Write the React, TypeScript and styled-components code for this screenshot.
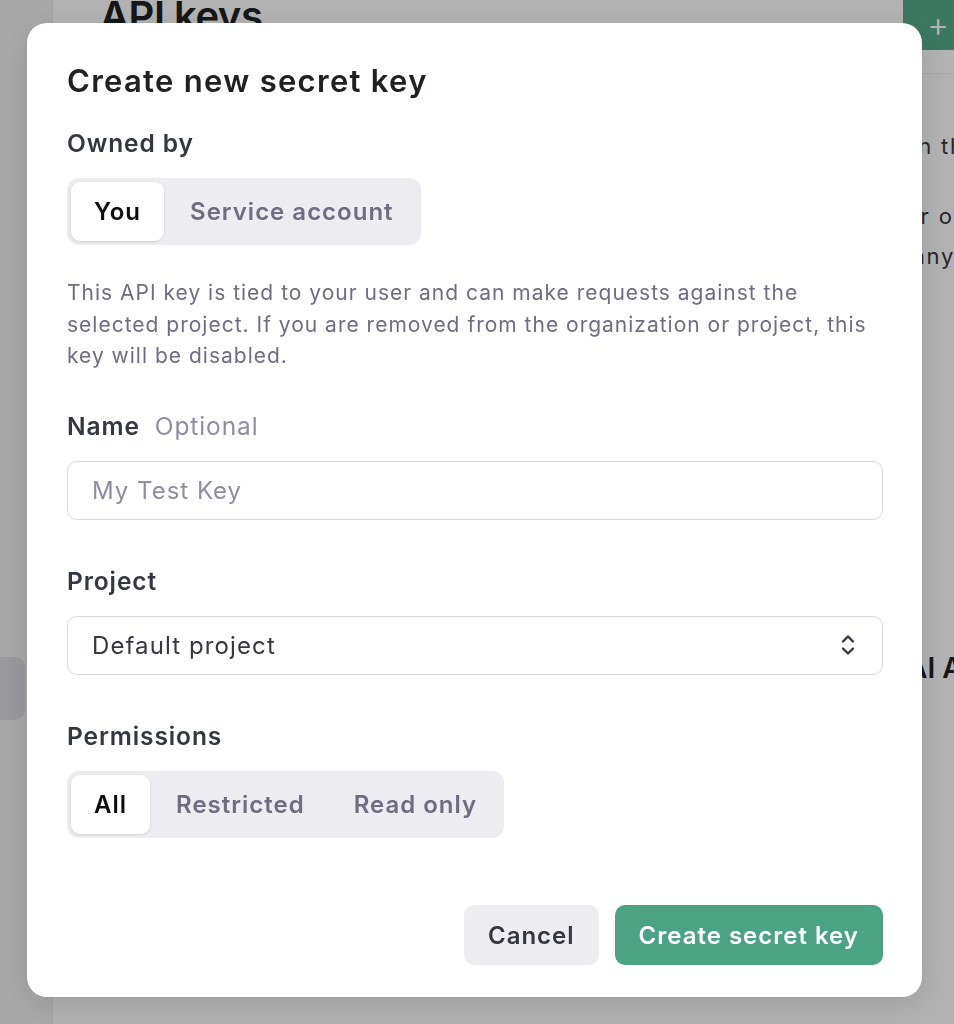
import React, { useState } from "react";
import styled, { createGlobalStyle } from "styled-components";

const GlobalStyle = createGlobalStyle`
  html, body {
    margin: 0;
    padding: 0;
    font-family: Inter, "Noto Sans", "Liberation Sans", sans-serif;
  }
  * {
    box-sizing: border-box;
  }
`;

/* ---------- page behind the dialog ---------- */

const Page = styled.div`
  display: flex;
  width: 100vw;
  height: 1024px;
  overflow: hidden;
  background: #ffffff;
`;

const Sidebar = styled.aside`
  width: 53px;
  flex-shrink: 0;
  background: #f1f1f1;
  border-right: 1px solid #e6e6e6;
  padding-top: 657px;
`;

const NavItem = styled.div`
  width: 25px;
  height: 63px;
  background: #dcdce2;
  border-radius: 0 10px 10px 0;
`;

const Main = styled.main`
  flex: 1;
  min-width: 0;
  display: flex;
  flex-direction: column;
`;

const Header = styled.header`
  display: flex;
  align-items: flex-start;
  justify-content: space-between;
  height: 74px;
  padding-left: 47px;
  border-bottom: 1px solid #ececec;
`;

const PageTitle = styled.h1`
  margin: -9px 0 0;
  font-size: 40px;
  font-weight: 600;
  letter-spacing: -0.5px;
  color: #202123;
`;

const AddButton = styled.div`
  width: 80px;
  height: 50px;
  margin-right: -29px;
  background: #56ad8b;
  border-radius: 0 0 0 8px;
  color: #ffffff;
  font-size: 34px;
  font-weight: 300;
  display: flex;
  align-items: center;
  padding-left: 24px;
  line-height: 1;
`;

const Content = styled.section`
  padding: 52px 0 0 47px;
`;

const Para = styled.p`
  margin: 0 0 30px;
  font-size: 22px;
  line-height: 40px;
  letter-spacing: 1.78px;
  white-space: nowrap;
  color: #353740;
`;

const Line = styled.span`
  display: block;
`;

const SectionTitle = styled.h2`
  margin: 0;
  padding-top: 344px;
  font-size: 28px;
  line-height: 36px;
  font-weight: 600;
  white-space: nowrap;
  color: #202123;
`;

/* ---------- dialog ---------- */

const Overlay = styled.div`
  position: fixed;
  inset: 0;
  background: rgba(0, 0, 0, 0.3);
  display: flex;
  align-items: flex-start;
  padding: 23px 0 0 27px;
`;

const Dialog = styled.div`
  width: 895px;
  height: 974px;
  background: #ffffff;
  border-radius: 20px;
  padding: 40px 39px 32px 40px;
  box-shadow: 0 8px 30px rgba(0, 0, 0, 0.12);
  display: flex;
  flex-direction: column;
`;

const DialogTitle = styled.h2`
  margin: 0;
  font-size: 31px;
  line-height: 36px;
  font-weight: 600;
  letter-spacing: 1.3px;
  color: #202123;
`;

const Label = styled.div<{ $top: number }>`
  margin-top: ${(p) => p.$top}px;
  display: flex;
  gap: 15px;
  font-size: 24.5px;
  line-height: 30px;
  font-weight: 600;
  letter-spacing: 0.9px;
  color: #353740;
`;

const Hint = styled.span`
  font-weight: 400;
  color: #8e8ea0;
`;

const Segmented = styled.div`
  align-self: flex-start;
  margin-top: 20px;
  display: flex;
  gap: 3px;
  padding: 4px;
  background: #ececf1;
  border-radius: 12px;
`;

const SegOption = styled.button<{ $active: boolean }>`
  height: 59px;
  padding: 0 23px;
  border: none;
  border-radius: 9px;
  font-family: inherit;
  font-size: 24px;
  font-weight: 600;
  letter-spacing: 1px;
  cursor: pointer;
  background: ${(p) => (p.$active ? "#ffffff" : "transparent")};
  color: ${(p) => (p.$active ? "#0d0d0d" : "#6e6e80")};
  box-shadow: ${(p) => (p.$active ? "0 1px 3px rgba(0, 0, 0, 0.12)" : "none")};
`;

const Description = styled.p`
  margin: 32px 0 0;
  font-size: 21px;
  line-height: 31.5px;
  letter-spacing: 1px;
  color: #6e6e80;
`;

const Field = styled.div`
  margin-top: 20px;
  display: flex;
  align-items: center;
  height: 59px;
  border: 1.5px solid #d9d9e3;
  border-radius: 10px;
  padding: 0 24px;
`;

const TextInput = styled.input`
  flex: 1;
  border: none;
  outline: none;
  padding: 0;
  font-family: inherit;
  font-size: 24px;
  letter-spacing: 1px;
  color: #353740;
  background: transparent;

  &::placeholder {
    color: #8e8ea0;
  }
`;

const SelectValue = styled.span`
  flex: 1;
  font-size: 24px;
  letter-spacing: 1.1px;
  color: #353740;
`;

const Footer = styled.div`
  margin-top: auto;
  display: flex;
  justify-content: flex-end;
  gap: 16px;
`;

const Button = styled.button<{ $primary?: boolean }>`
  height: 60px;
  padding: 0 24px;
  border: none;
  border-radius: 10px;
  font-family: inherit;
  font-size: 24px;
  font-weight: 600;
  letter-spacing: 1px;
  cursor: pointer;
  background: ${(p) => (p.$primary ? "#4ca383" : "#ececf1")};
  color: ${(p) => (p.$primary ? "#ffffff" : "#353740")};
`;

const ChevronUpDown = () => (
  <svg width="20" height="24" viewBox="0 0 20 24" fill="none">
    <path
      d="M5 8.5 10 3.5l5 5M5 15.5l5 5 5-5"
      stroke="#353740"
      strokeWidth="2.4"
      strokeLinecap="round"
      strokeLinejoin="round"
    />
  </svg>
);

export default function App() {
  const [owner, setOwner] = useState("you");
  const [perm, setPerm] = useState("all");

  return (
    <>
      <GlobalStyle />
      <Page>
        <Sidebar>
          <NavItem />
        </Sidebar>
        <Main>
          <Header>
            <PageTitle>API keys</PageTitle>
            <AddButton>+</AddButton>
          </Header>
          <Content>
            <Para>
              As an owner of this project, you can view and manage all API keys in this project.
            </Para>
            <Para>
              <Line>
                Do not share your API key with others, or expose it in the browser or other
                client-side code.
              </Line>
              <Line>
                To protect the account security, OpenAI may automatically disable any API key
                that has leaked publicly.
              </Line>
            </Para>
            <SectionTitle>
              All secret keys created by members in this project, for OpenAI API access
            </SectionTitle>
          </Content>
        </Main>
      </Page>

      <Overlay>
        <Dialog>
          <DialogTitle>Create new secret key</DialogTitle>

          <Label $top={29}>Owned by</Label>
          <Segmented>
            <SegOption $active={owner === "you"} onClick={() => setOwner("you")}>
              You
            </SegOption>
            <SegOption $active={owner === "service"} onClick={() => setOwner("service")}>
              Service account
            </SegOption>
          </Segmented>

          <Description>
            This API key is tied to your user and can make requests against the selected project.
            If you are removed from the organization or project, this key will be disabled.
          </Description>

          <Label $top={39}>
            Name <Hint>Optional</Hint>
          </Label>
          <Field>
            <TextInput placeholder="My Test Key" />
          </Field>

          <Label $top={46}>Project</Label>
          <Field>
            <SelectValue>Default project</SelectValue>
            <ChevronUpDown />
          </Field>

          <Label $top={46}>Permissions</Label>
          <Segmented>
            <SegOption $active={perm === "all"} onClick={() => setPerm("all")}>
              All
            </SegOption>
            <SegOption $active={perm === "restricted"} onClick={() => setPerm("restricted")}>
              Restricted
            </SegOption>
            <SegOption $active={perm === "read"} onClick={() => setPerm("read")}>
              Read only
            </SegOption>
          </Segmented>

          <Footer>
            <Button>Cancel</Button>
            <Button $primary>Create secret key</Button>
          </Footer>
        </Dialog>
      </Overlay>
    </>
  );
}
